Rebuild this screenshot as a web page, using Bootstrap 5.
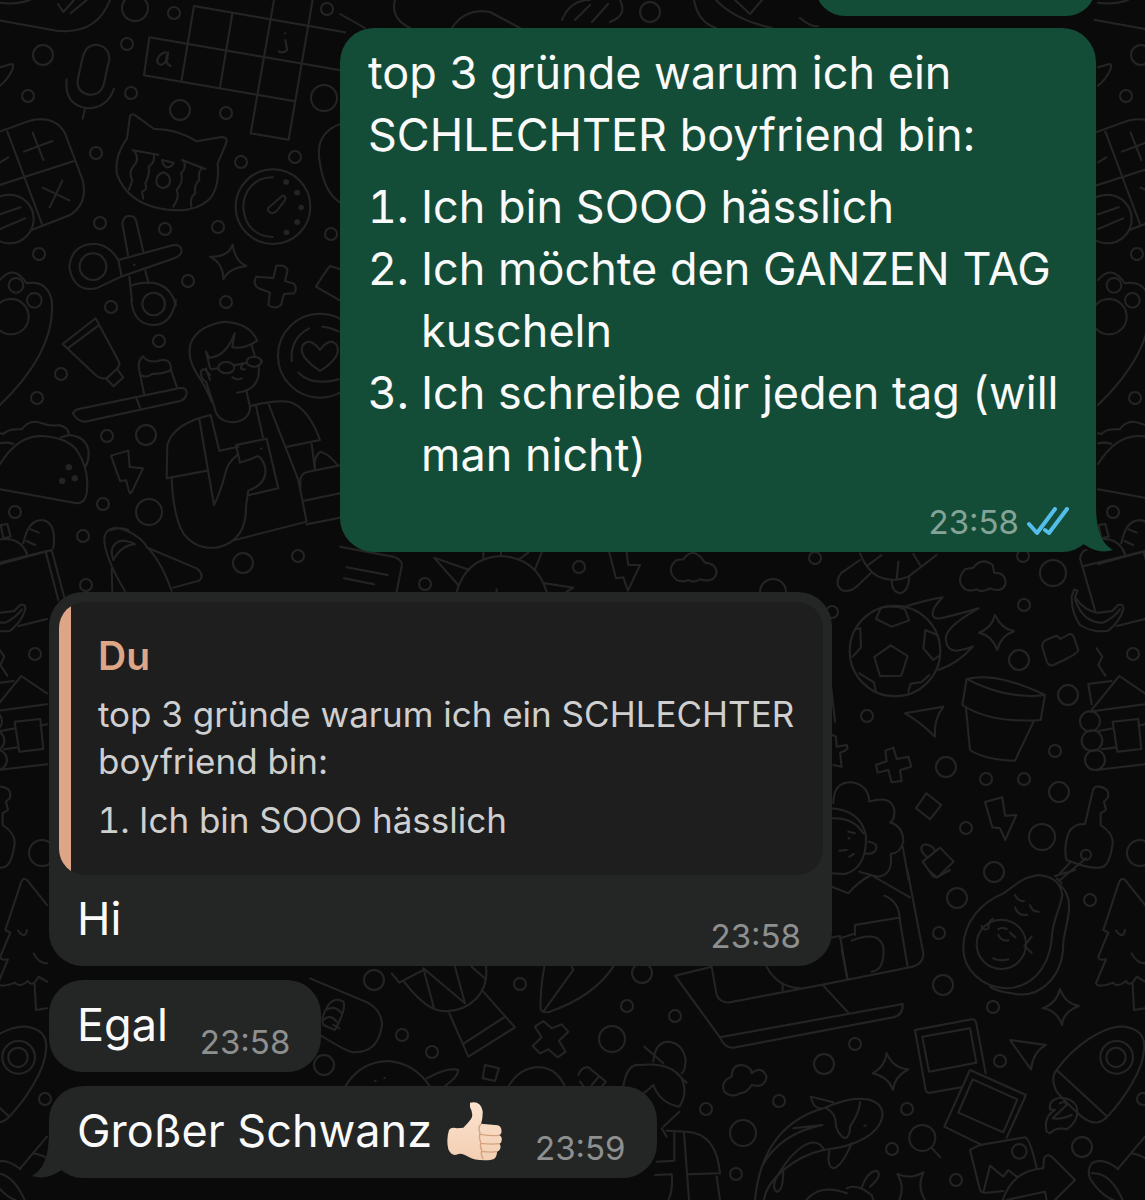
<!DOCTYPE html>
<html lang="de">
<head>
  <meta charset="UTF-8" />
  <meta name="viewport" content="width=device-width, initial-scale=1.0"/>
  <title>Chat</title>
  <link href="https://cdn.jsdelivr.net/npm/bootstrap@5.3.0/dist/css/bootstrap.min.css" rel="stylesheet">
  <style>
    body {
      background: #0a0a0a;
      color: #fafafa;
      font-family: Inter, "Noto Sans", sans-serif;
      font-size: 45px;
      line-height: 62px;
    }
    .chat { min-height: 100vh; padding: 0 49px 21px; }
    .wallpaper { z-index: 0; }
    .bubble { position: relative; z-index: 1; border-radius: 34px; }
    .bubble-out { background: #144d37; align-self: flex-end; max-width: 756px; }
    .bubble-in { background: #242626; align-self: flex-start; max-width: 783px; }
    .bubble-prev { width: 281px; height: 60px; margin-top: -44px; }
    .msg-out { padding: 14px 27px 14px 28px; margin-top: 12px; }
    .msg-reply { padding: 10px 9px 16px 10px; margin-top: 40px; }
    .msg-short { padding: 14px 31px 16px 28px; margin-top: 14px; column-gap: 32px; }
    .steps { padding-left: 53px; margin: 10px 0 20px; }
    .stamp { font-size: 33px; line-height: 28px; color: #8e9090; }
    .msg-out .stamp { color: #83a496; line-height: 32px; }
    .quote {
      background: #1e1e1e;
      border-radius: 26px;
      padding: 30px 28px 31px 39px;
      font-size: 35px;
      line-height: 47px;
      color: #cfcfcf;
      overflow: hidden;
      position: relative;
    }
    .quote::before {
      content: "";
      position: absolute;
      inset: 0 auto 0 0;
      width: 12px;
      background: #dfa587;
    }
    .quote-name { color: #dfa587; font-size: 39px; font-weight: 600; }
    .quote-steps { padding-left: 41px; margin: 12px 0 0; }
    .reply-row { padding: 13px 22px 0 18px; }
    .with-emoji { column-gap: 14px; }
    .tail { position: absolute; bottom: 0; }
    .tail-out { right: -17px; }
    .tail-in { left: -17px; }
  </style>
</head>

<body>
  <main class="chat position-relative overflow-hidden d-flex flex-column">
    <svg class="wallpaper position-absolute top-0 start-0 w-100 h-100" aria-hidden="true">
      <defs>
        <pattern id="doodles" width="1098" height="1200" patternUnits="userSpaceOnUse">
          <g id="art" fill="none" stroke="#242424" stroke-width="6" stroke-linecap="round" stroke-linejoin="round">
            <g id="bubbles" stroke-width="2"></g>

            <!-- phone, microphone, crossword, cat, timer, scissors -->
            <g transform="scale(.3333)">
              <path d="M-10 60L170 92Q290 105 330 0M0 8Q50 15 90 0M174 12L190 36L222 0M212 40L260 0"/>
              <path d="M248 172Q258 133 290 134Q328 140 328 178L310 258Q298 288 266 284Q230 276 233 240ZM200 238Q192 315 262 325Q322 325 342 266M255 327L248 356"/>
              <path d="M582 18L1035 97M448 112L1035 213M432 226L884 304M752 400L866 419M582 18L545 240M448 112L432 226M697 42L660 262M822 0L752 400M938 0L866 419"/>
              <path d="M496 157Q470 165 472 187Q482 205 502 180L504 157Q490 190 512 198M856 120L862 150Q850 162 836 154M855 100h1"/>
              <path d="M390 348Q397 338 407 347L462 387Q530 386 590 424L665 411Q684 411 679 429L653 490Q660 560 628 598Q580 644 484 626Q380 607 350 520Q344 465 381 415Z"/>
              <path d="M398 451L475 464M546 480L616 507M405 456Q420 480 399 500Q385 520 397 540Q389 565 386 570M462 463Q465 490 446 500Q451 520 436 550Q445 570 426 575L430 596M552 484Q560 505 543 520Q552 545 530 570Q540 590 520 620M604 507Q594 515 598 540Q581 555 586 580Q569 590 574 620M486 480L521 488Q516 502 500 502Q488 496 486 480M490 517C463 526 462 560 488 564C517 561 517 526 490 517"/>
              <circle cx="819" cy="620" r="112"/><path d="M819 532C760 530 728 580 730 625C735 680 770 710 818 711M804 625L847 587Q858 586 856 600L829 634Q815 646 804 632Z"/>
              <path stroke-width="16" d="M858 546h1M891 578h1M903 622h1M891 666h1M859 697h1"/>
              <path d="M-10 398L90 362Q165 345 195 400L248 540Q265 610 210 645L95 690M22 395L127 675M-10 558L220 484M72 455L157 423M98 398L130 480M128 563L208 601M187 542L149 622M0 487L25 472"/>
              <circle cx="28" cy="657" r="73"/><path d="M0 643L62 622M0 687L75 655M0 202L34 192Q45 192 34 215Q22 240 0 257"/>
              <path d="M355 780L365 829L292 864Q222 880 208 802Q214 735 278 732Q325 730 355 780ZM384 765L367 670Q371 646 389 648Q405 647 409 665L430 755M355 780L518 736Q542 732 545 752Q546 765 525 774L367 829M388 830L396 903M436 812L446 850M390 858C460 835 510 850 528 915M402 794h2"/><circle cx="279" cy="800" r="40"/>
              <path d="M698 734Q706 785 739 798Q685 805 670 838Q670 790 630 770Q685 772 698 734M829 797Q865 795 862 815L855 843L882 851Q893 865 882 880L852 882L843 915Q825 930 805 915L810 878L776 865Q757 855 768 830L820 834ZM1035 812L990 798Q980 810 948 860L1035 910M1035 368Q950 390 957 470Q970 590 1035 615"/>
              <path d="M0 840Q40 790 80 850Q140 840 155 900"/><circle cx="48" cy="856" r="22"/><circle cx="103" cy="901" r="22"/>
            </g>

            <!-- toothbrush, barista, taco, rocket toy -->
            <g transform="translate(0 300) scale(.3333)">
              <circle cx="33" cy="50" r="53"/><path d="M155 0Q170 150 0 315M394 0Q400 75 463 75Q515 73 528 0"/><circle cx="461" cy="12" r="34"/>
              <path d="M287 55L188 132L290 228Q310 240 322 233L350 207Q362 195 357 185ZM202 146L295 77M320 238L341 259L370 232L350 207M240 326L540 264Q560 262 560 278Q560 297 537 304L255 365Q230 363 219 340Q225 328 240 326M408 292L421 325M433 285L418 212Q411 180 430 169Q438 186 470 184Q515 170 513 210L530 260M420 225Q440 235 456 222Q490 222 513 210"/>
              <path d="M0 400L10 402Q25 385 65 388Q90 355 125 370Q155 380 175 375Q205 380 207 405Q260 410 266 455Q267 480 257 500M0 492Q55 405 125 408Q200 412 230 450Q270 510 260 580Q255 610 230 610L0 568M0 430Q20 425 40 432M183 412L207 405"/>
              <path stroke-width="18" d="M206 502h1M224 535h1M186 543h1"/>
              <path d="M333 467L385 452L389 501L429 505L395 577Q390 585 386 570L378 541L360 543Z"/>
              <path d="M635 305Q618 260 590 220Q560 175 572 130Q595 75 675 65Q750 70 772 122Q735 148 697 142L704 100Q678 170 628 173L618 155L630 204M630 225Q610 195 602 218Q605 240 618 245L643 320Q650 365 700 367Q750 360 750 320L740 276M755 135L765 170M776 195Q785 270 711 278M697 232Q710 242 726 235M630 240L618 205M728 193Q715 210 735 208"/>
              <ellipse cx="679" cy="203" rx="24" ry="17"/><ellipse cx="762" cy="185" rx="22" ry="15"/><path d="M704 196L740 188M634 208L655 205M784 180L786 186"/>
              <path d="M632 345Q520 370 502 435L500 535L620 512M752 318Q850 295 880 310Q930 335 960 420L862 440M598 358L642 615Q660 580 675 525Q680 490 712 465M632 345L658 452L715 440M768 318L789 412M807 315L895 540L920 665L698 722M515 535Q520 650 550 700Q590 752 655 742Q740 720 738 620L745 572Q805 550 795 500Q780 455 760 475L720 488L708 435L800 416L835 565L748 585M783 446h2"/>
              <path d="M935 432L945 510M1020 496L925 515Q895 520 902 560M912 602L1020 580M920 673L1020 653M945 505Q940 470 962 455Q990 465 1012 495"/>
              <circle cx="960" cy="167" r="126"/><path d="M960 213Q890 165 909 135Q930 110 960 150Q990 110 1010 135Q1028 170 960 213M875 183Q870 115 927 85M967 80Q990 82 1017 95M895 218Q940 260 1017 238"/>
              <path d="M0 792L155 750L195 900M137 755L175 900M70 730Q85 655 130 661Q170 670 160 745M0 718Q60 710 80 760M92 688L116 698M80 723L105 735M2 675L22 672L32 710L10 715Z"/>
              <path d="M375 873C330 800 305 730 315 705C340 655 425 710 440 740C480 780 500 830 515 873M440 742L590 805Q615 825 598 842L520 863M405 733Q365 735 340 780Q330 755 340 738Q360 710 405 733M332 690Q360 680 385 690M337 873L335 805"/>
            </g>

            <!-- football, flower pot, cabin, keys -->
            <g transform="translate(830 550) scale(.3333)">
              <path d="M90 30L35 68Q10 100 35 120Q60 130 85 105L122 70M90 10Q110 60 145 80Q190 100 235 80L320 15M115 45L155 15M205 35L200 90M250 12L270 45M185 92Q185 125 210 130Q235 125 238 80"/>
              <path d="M405 118Q375 90 405 58L430 53Q455 20 488 45L493 68Q525 67 527 98Q520 130 480 115Q455 130 440 118Q420 125 405 118"/>
              <circle cx="195" cy="303" r="136"/><path d="M182 286L233 318L214 377L150 378L133 321ZM138 207L185 230L238 211L224 177Q190 165 153 173ZM68 320L93 292L91 235L80 237M322 255L286 240L280 295L310 330L326 318M88 370L132 397L137 424M298 375L275 396L242 401L235 425"/>
              <path d="M225 170Q290 150 338 142Q305 175 308 195Q312 210 340 203Q390 192 446 175Q355 225 348 260Q345 300 380 302Q405 300 429 289Q385 340 325 360M495 195Q515 237 552 244Q512 257 502 300Q485 255 447 248Q485 235 495 195"/>
              <path d="M637 292Q635 278 648 270L680 257L692 267L718 252Q727 250 732 262L745 300Q745 312 670 345Q657 350 650 334ZM733 118L743 122L735 142Q765 185 805 188L847 183L864 165Q882 160 880 178Q870 215 835 242Q790 250 750 225Q725 190 725 140ZM735 148Q760 220 820 218Q855 200 870 178M795 180L750 25Q755 0 770 0M762 48L945 3M860 228L945 207M880 0L885 12"/>
              <path d="M410 387Q500 365 645 435Q530 450 410 387L397 465Q480 520 632 510L645 435M408 475L420 600Q465 630 555 632L612 512M225 490L340 470Q310 510 315 560Q270 515 225 490M166 602L190 593L200 627L235 620L244 650L210 661L215 693L185 697L175 660L143 668L138 645L170 634Z"/>
              <path d="M785 463L775 402L845 393M785 480L868 378L945 430M780 485L945 463M848 515L925 507L934 597L862 605ZM805 543L850 535M816 598L860 592M925 527L945 523M800 660L945 643M800 295L817 320L805 345L826 377"/><circle cx="780" cy="514" r="30"/><circle cx="786" cy="572" r="31"/><circle cx="795" cy="630" r="30"/>
              <path d="M289 730L334 765L300 808L258 775ZM465 756L517 742L525 797L559 795L526 870L510 835L487 832ZM765 822L788 725Q790 707 810 710Q840 715 834 743L822 755L828 780L812 790L812 825Q850 850 848 880Q840 945 815 952Q785 960 710 930Q700 900 715 850Q730 820 765 822M768 925L690 990M720 938L690 970"/><circle cx="768" cy="914" r="15"/>
              <path d="M278 935L330 893L371 935L322 983L310 980ZM290 920Q270 905 275 890Q285 875 310 893L315 905M0 552L18 560L20 590L50 585Q60 600 30 608L35 650L10 645M0 380L15 515"/>
              <path d="M10 760Q10 695 65 697Q115 705 118 755Q185 735 193 780Q195 810 180 817Q220 830 220 875Q212 910 182 912Q190 975 145 980Q100 970 88 965M0 775Q95 780 108 860Q110 955 45 972L0 970M0 805Q70 800 100 850M115 875Q145 880 138 898Q130 915 105 910M55 845L75 850M55 865h4M28 902L50 900M58 920L72 912M218 890L236 990"/>
            </g>

            <!-- sofa, avocado, fir tree, photos, rocket -->
            <g transform="translate(830 870) scale(.3333)">
              <path d="M232 0L280 250Q280 285 240 292L0 340M123 15L240 82M0 48L55 70Q85 35 123 15M163 77Q210 95 210 155L233 290M75 195L75 165L205 143M0 203L30 198L52 325M30 205L75 190M65 212Q145 180 160 230Q165 300 125 305"/>
              <path d="M400 235C400 150 460 95 520 70C565 40 570 25 625 15Q690 20 697 75C690 120 665 155 665 210C655 300 600 355 525 355C455 350 400 300 400 235M690 45C745 90 700 180 700 220C700 320 630 390 545 370Q500 365 480 350"/><circle cx="514" cy="223" r="74"/>
              <path d="M555 75Q565 95 582 93M555 112Q565 140 592 134M600 105Q605 125 626 125M505 178Q515 170 530 177M505 195Q515 215 535 211M540 188L556 202M490 265Q510 275 535 268M455 168Q462 185 475 175Q475 150 490 147M605 200L583 228L605 248M675 18L735 0M680 25L695 40M295 0L320 22L360 0"/>
              <path d="M945 105L885 30Q875 22 868 35L820 180L835 188L805 260Q805 272 828 268L798 340Q805 355 850 338Q860 355 888 333Q900 355 920 320L945 335M858 182Q880 210 885 180M905 250Q920 280 945 280M908 342L912 420L945 415"/>
              <path d="M255 480L425 448Q437 447 439 460L467 610M255 480L287 660Q290 670 300 668L395 652M277 500L420 475L439 578L297 605ZM420 600L588 675L530 803M420 600L343 770L455 825M428 628L562 688L520 787L385 728ZM450 825L420 840L450 960Q455 970 470 968L520 963M450 825L585 802Q600 805 620 895M460 968L480 887L520 920L535 900L560 920M518 990Q550 900 640 895L642 865Q650 850 665 860L735 930L675 990M530 990L645 965L650 990"/><circle cx="568" cy="844" r="22"/>
              <path d="M540 510L648 525Q610 545 603 598ZM690 357Q705 400 747 408Q700 425 696 465Q680 420 638 415Q680 400 690 357M170 550Q190 595 235 598Q193 620 189 660Q175 620 128 610Q165 590 170 550M202 912Q240 930 280 907Q260 950 285 990M202 912Q225 950 208 990"/>
              <path d="M680 600C730 530 820 465 885 470Q950 480 942 540C940 600 880 690 832 740Q800 775 755 740Q700 690 680 665Q660 625 680 600L832 740"/><circle cx="860" cy="562" r="49"/><circle cx="858" cy="562" r="29"/>
              <path d="M690 683Q655 690 660 718L675 720Q640 740 650 785L660 790Q680 770 710 778Q750 750 740 710Q730 685 690 683M690 700Q705 690 710 705L668 745Q690 750 725 735"/>
              <circle cx="277" cy="804" r="39"/><path d="M307 836L331 862M865 895L945 800M905 850Q930 855 945 865M865 898Q820 860 785 880Q765 910 790 940Q820 980 850 990M785 910Q840 905 878 990"/>
            </g>

            <!-- sofa base, woman, clouds, koi -->
            <g transform="translate(640 950) scale(.3333)">
              <path d="M215 50L105 77L240 262L788 162Q790 195 760 202L280 293Q255 295 240 262M215 50L230 135Q240 160 270 157L570 100M380 50Q410 110 480 115M550 107L625 188M605 0L622 85M428 105L428 120"/>
              <path d="M13 290L70 340M40 335Q45 275 85 275Q130 280 137 330Q135 365 125 370M0 345Q90 335 125 385Q145 430 118 470Q60 460 40 405L0 440M110 370L140 398M118 485L70 530M65 535L80 560M80 542L140 545Q230 550 240 670L145 673M132 548L147 750M103 545L103 632L50 635M45 675L95 673Q100 720 85 750M230 680L240 750"/>
              <path d="M275 380Q275 345 305 345Q335 350 335 370Q365 345 380 380Q375 415 335 405Q320 430 300 430Q275 445 253 425Q240 395 275 380"/>
              <path d="M345 750C360 600 430 510 550 475C650 430 720 440 728 490C725 550 650 590 550 600C460 620 380 690 372 750M512 440L580 457M512 440Q520 475 540 475M560 475Q590 490 588 530Q600 560 615 565Q630 560 630 530Q660 485 660 455M460 535L547 525Q420 550 365 650M420 665C460 600 520 550 550 595M568 603Q560 650 580 655Q605 650 635 580M430 660Q430 725 410 725Q390 710 420 665M673 527h4M500 750Q540 700 620 730M620 715Q650 700 695 735L700 750M665 715Q680 665 710 662Q730 675 690 710"/>
            </g>

            <!-- pot, badminton and crosses between the incoming bubbles -->
            <g transform="translate(310 950) scale(.3333)">
              <path d="M0 85L150 148Q215 170 216 225Q205 310 130 307Q110 305 30 255M55 165Q75 140 100 155Q110 175 75 240L40 225Q30 205 55 165M52 178Q75 165 95 190M40 210Q60 190 80 215M70 225L88 235"/>
              <path d="M245 70L268 98L340 60M280 92Q350 185 405 184Q460 185 500 145Q535 105 528 50M340 55L372 175M340 55L465 160L435 50M418 190L475 320L615 232L520 125M462 280L582 202M485 50L528 88M703 50Q690 120 692 180Q700 190 720 185Q850 140 910 50M700 185L790 60M785 50L790 60"/>
              <path d="M675 230L700 213L725 235L755 223L775 245L747 272L767 305L743 322L715 298L690 310L668 288L695 262ZM105 410Q150 335 235 333Q315 340 360 410M350 385Q415 350 445 360Q445 380 405 408M525 345L567 355L555 393L518 385ZM595 410Q630 350 690 352Q740 355 765 410M805 375Q815 350 835 352L888 395L875 410M810 395L820 408M845 405L865 382M940 410Q950 340 990 345M195 392h2M223 384h2"/>
            </g>

            <g transform="translate(340 530) scale(.3333)">
              <path d="M0 50L160 80Q190 90 185 110L170 185M20 112L143 135M12 145L102 163M355 165L282 83L388 120M350 185Q380 82 485 78Q590 85 620 185M430 68V88M483 68V78M535 90L565 68M605 68L585 118M615 160L700 173L680 185M470 178V188M808 68L828 145L850 142L864 182L900 105L865 105L860 68M1010 150Q975 120 1010 90L1030 88Q1060 45 1095 98Q1130 100 1130 130Q1120 160 1080 148Q1060 160 1045 150Q1030 158 1010 150"/>
            </g>

            <!-- strip above the first full message -->
            <path stroke-width="2" d="M340 14L365 28M395 0Q390 18 410 28M452 28Q465 8 490 12L520 28M562 20Q570 0 590 0M575 20L590 5M592 22L608 4M610 22Q628 15 620 0M694 0Q698 22 716 28M716 0Q735 20 772 28M735 0L750 14L762 0M800 18Q812 28 818 26"/>
          </g>
          <use href="#art" x="-1098"/>
          <use href="#art" x="1098"/>
        </pattern>
      </defs>
      <rect width="100%" height="100%" fill="url(#doodles)"/>
    </svg>

    <div class="bubble bubble-out bubble-prev"></div>

    <article class="bubble bubble-out msg-out">
      <div>top 3 gründe warum ich ein SCHLECHTER boyfriend bin:</div>
      <ol class="steps">
        <li>Ich bin SOOO hässlich</li>
        <li>Ich möchte den GANZEN TAG kuscheln</li>
        <li>Ich schreibe dir jeden tag (will man nicht)</li>
      </ol>
      <div class="d-flex justify-content-end align-items-center gap-2">
        <time class="stamp">23:58</time>
        <svg width="42" height="30" viewBox="0 0 42 30" fill="none" stroke="#53bdeb" stroke-width="4" stroke-linecap="round" stroke-linejoin="round" role="img" aria-label="Gelesen">
          <path d="M2 17L10 26L28 2M18 23L22 26L40 2"/>
        </svg>
      </div>
      <svg class="tail tail-out" width="44" height="48" viewBox="0 0 44 48" fill="#144d37" aria-hidden="true">
        <path d="M12 0H27C27 26 32 39 44 46C34 49 25 47 16 41L4 34Z"/>
      </svg>
    </article>

    <article class="bubble bubble-in msg-reply">
      <blockquote class="quote mb-0">
        <div class="quote-name">Du</div>
        <div class="mt-2 pt-1">top 3 gründe warum ich ein SCHLECHTER boyfriend bin:</div>
        <ol class="quote-steps">
          <li>Ich bin SOOO hässlich</li>
        </ol>
      </blockquote>
      <div class="reply-row d-flex justify-content-between align-items-end">
        <span>Hi</span>
        <time class="stamp">23:58</time>
      </div>
    </article>

    <article class="bubble bubble-in msg-short d-flex align-items-end">
      <span>Egal</span>
      <time class="stamp">23:58</time>
    </article>

    <article class="bubble bubble-in msg-short d-flex align-items-end">
      <span class="with-emoji d-flex align-items-center">Großer Schwanz
        <svg width="57" height="60" viewBox="73 62 171 180" role="img" aria-label="Daumen hoch">
          <defs>
            <linearGradient id="skin" x1="0" y1="0" x2="0" y2="1">
              <stop offset="0" stop-color="#fbe3cf"/>
              <stop offset="1" stop-color="#f3cfb3"/>
            </linearGradient>
          </defs>
          <path fill="url(#skin)" d="M145 67Q177 60 183 92Q184 112 178 130L228 135Q242 140 239 158Q236 164 232 165Q242 168 240 181Q239 188 233 190Q239 196 235 207Q232 213 226 214Q227 237 206 239Q160 242 140 229Q118 216 108 222Q90 229 80 207Q73 177 82 149Q88 139 107 144L125 142Q138 130 148 116Q157 104 145 80Z"/>
          <path fill="none" stroke="#d5a27f" stroke-width="4" stroke-linecap="round" d="M178 131Q168 142 175 158Q171 171 177 186Q174 199 180 210Q177 224 184 235M178 162Q210 168 232 165M178 189Q208 193 233 190M181 213Q205 217 226 214"/>
        </svg>
      </span>
      <time class="stamp">23:59</time>
      <svg class="tail tail-in" width="44" height="48" viewBox="0 0 44 48" fill="#242626" aria-hidden="true">
        <path d="M32 0H17C17 26 12 39 0 46C10 49 19 47 28 41L40 34Z"/>
      </svg>
    </article>
  </main>

  <script src="https://cdn.jsdelivr.net/npm/bootstrap@5.3.0/dist/js/bootstrap.bundle.min.js"></script>
  <script>
    // loose circles of the wallpaper, grouped by radius
    const circles = {
      6: [[174,13],[327,9],[127,44],[28,96],[131,93],[226,113],[96,153],[241,162],[295,157],[100,223],[165,229],
        [218,227],[331,234],[39,254],[188,281],[111,307],[226,302],[159,341],[61,374],[37,398],[107,436],[103,504],
        [15,512],[83,536],[86,585],[298,556],[1023,556],[1024,605],[867,716],[986,779],[1024,779],[1055,751],
        [966,828],[1133,654],[832,612],[939,933],[1090,900],[993,1007],[1000,1061],[855,1044],[907,1109],[892,1149],
        [956,1180],[1143,1099],[675,1016],[706,1109],[779,1101],[736,1174],[402,1035],[432,1052],[520,984],
        [627,1006],[579,567],[425,584],[815,558]],
      10: [[43,55],[180,110],[146,435],[243,563],[1019,660],[1068,695],[946,767],[1059,792],[994,872],[957,898],
        [943,985],[1082,1147],[824,1064],[374,980],[324,1065],[642,973],[650,12]],
      13: [[135,8],[324,98],[149,512],[1053,573],[1042,837],[1140,853],[743,1133],[612,1039],[773,592]]
    };

    const group = document.getElementById("bubbles");
    Object.entries(circles).forEach(([r, points]) => {
      points.forEach(([x, y]) => {
        const circle = document.createElementNS("http://www.w3.org/2000/svg", "circle");
        circle.setAttribute("cx", x);
        circle.setAttribute("cy", y);
        circle.setAttribute("r", r);
        group.appendChild(circle);
      });
    });
  </script>
</body>
</html>
